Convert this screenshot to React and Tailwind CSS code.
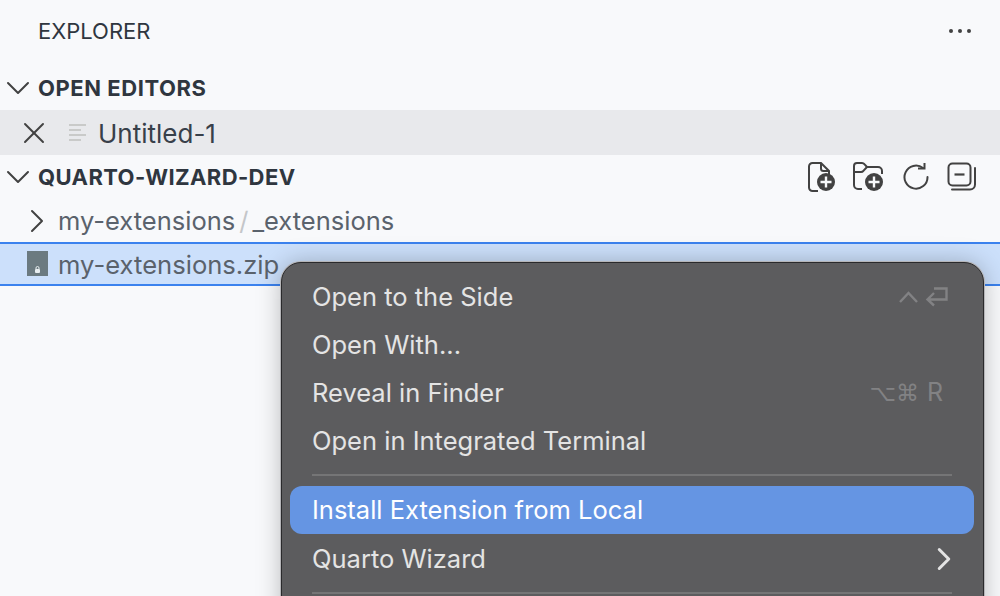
import React from 'react';
import { ChevronDown, ChevronRight, X } from 'lucide-react';

function NewFileIcon() {
    return (
        <svg width="28" height="30" viewBox="0 0 28 30" fill="none" stroke="#424242" strokeWidth="2" className="-mr-[1px]">
            <path d="M10 29H4.500A3.500 3.500 0 0 1 1 25.500V4.500A3.500 3.500 0 0 1 4.500 1H13l8 8v4" />
            <path d="M13 1v5.500A2.500 2.500 0 0 0 15.500 9H21" />
            <circle cx="18" cy="20" r="9" fill="#424242" stroke="none" />
            <path d="M18 14.500v11M12.500 20h11" stroke="#f8f9fb" strokeWidth="2.400" />
        </svg>
    );
}

function NewFolderIcon() {
    return (
        <svg width="32" height="30" viewBox="0 0 32 30" fill="none" stroke="#424242" strokeWidth="2">
            <path d="M9 27H5a4 4 0 0 1-4-4V4a3 3 0 0 1 3-3h5a3 3 0 0 1 2.400 1.200L14 5h11a4 4 0 0 1 4 4v3" />
            <path d="M1 10h7a3 3 0 0 0 2.400-1.200L14 5" />
            <circle cx="21" cy="20" r="9" fill="#424242" stroke="none" />
            <path d="M21 14.500v11M15.500 20h11" stroke="#f8f9fb" strokeWidth="2.400" />
        </svg>
    );
}

function RefreshIcon() {
    return (
        <svg width="26" height="28" viewBox="0 2 26 28" fill="none" stroke="#424242" strokeWidth="2">
            <path d="M20 7A11.500 11.500 0 1 0 24.500 16" strokeLinecap="round" />
            <path d="M21.500 1v6.500H15" />
        </svg>
    );
}

function CollapseIcon() {
    return (
        <svg width="30" height="30" viewBox="0 0 30 30" fill="none" stroke="#424242" strokeWidth="2">
            <rect x="1.500" y="1.500" width="22" height="22" rx="4" />
            <path d="M7.500 12.500h10" strokeWidth="2.200" />
            <path d="M5 27.500h18a5 5 0 0 0 5-5V6" strokeLinecap="round" />
        </svg>
    );
}

function Row({ children, className }) {
    return <div className={`flex items-center ${className}`}>{children}</div>;
}

function MenuItem({ label, shortcut, arrow, className = '' }) {
    return (
        <div className={`flex items-center justify-between h-12 pl-[30px] text-[#e4e4e4] ${className}`}>
            <span className="text-[25.5px]">{label}</span>
            {shortcut}
            {arrow && <ChevronRight size={38} strokeWidth={1.9} className="mr-[20px] text-[#e4e4e4]" />}
        </div>
    );
}

function Separator() {
    return <div className="h-[2px] ml-[30px] mr-[31px] bg-[#757576]" />;
}

export default function App() {
    return (
        <div className="relative w-[1000px] h-[596px] overflow-hidden bg-[#f8f9fb] font-['Inter',sans-serif] text-[#2f363f]">
            <div className="flex items-center justify-between h-[66px] pb-[4px] pl-[38px] pr-[29px]">
                <span className="text-[22px]">EXPLORER</span>
                <div className="flex gap-[5px]">
                    <span className="w-1 h-1 rounded-full bg-[#424242]" />
                    <span className="w-1 h-1 rounded-full bg-[#424242]" />
                    <span className="w-1 h-1 rounded-full bg-[#424242]" />
                </div>
            </div>

            <Row className="h-11">
                <ChevronDown size={40} strokeWidth={1.2} className="-ml-[2px] text-[#424242]" />
                <span className="text-[22px] font-bold tracking-[0.55px]">OPEN EDITORS</span>
            </Row>
            <Row className="h-[45px] bg-[#e8e9ec]">
                <X size={36} strokeWidth={1.3} className="ml-[16px] text-[#424242]" />
                <svg width="18" height="18" viewBox="0 0 18 18" className="ml-[17px]" fill="#c9cac9">
                    <rect x="0" y="0" width="17" height="2" />
                    <rect x="0" y="5" width="12" height="2" />
                    <rect x="0" y="10" width="17" height="2" />
                    <rect x="0" y="15" width="12" height="2" />
                </svg>
                <span className="ml-[11px] pt-[1px] text-[26px] text-[#38404a]">Untitled-1</span>
            </Row>

            <Row className="h-11 justify-between pr-[23px]">
                <div className="flex items-center">
                    <ChevronDown size={40} strokeWidth={1.2} className="-ml-[2px] text-[#424242]" />
                    <span className="text-[22px] font-bold tracking-[0.4px]">QUARTO-WIZARD-DEV</span>
                </div>
                <div className="flex items-center gap-[18px]">
                    <NewFileIcon />
                    <NewFolderIcon />
                    <RefreshIcon />
                    <CollapseIcon />
                </div>
            </Row>

            <Row className="h-[43px] text-[#5a626c]">
                <ChevronRight size={40} strokeWidth={1.2} className="ml-[17px] text-[#424242]" />
                <span className="ml-[1px] pt-[2px] text-[25.500px]">my-extensions</span>
                <span className="mx-[4px] pt-[2px] text-[25.500px] text-[#c4c6c9]">/</span>
                <span className="pt-[2px] text-[25.500px]">_extensions</span>
            </Row>
            <Row className="h-11 bg-[#cce0fb] border-y-2 border-[#3b82ee] text-[#5a626c]">
                <svg width="21" height="25" viewBox="0 0 21 25" className="ml-[27px] -mt-px">
                    <rect width="21" height="25" fill="#6b7a80" />
                    <rect x="8" y="18" width="5" height="4" rx="1" fill="#e8eef0" />
                    <path d="M9 18v-1a1.500 1.500 0 0 1 3 0v1" fill="none" stroke="#e8eef0" />
                </svg>
                <span className="ml-[10px] pt-[3px] text-[25.600px]">my-extensions.zip</span>
            </Row>

            {/* context menu sits over the tree */}
            <div className="absolute left-[281px] top-[262px] w-[703px] h-[400px] pt-[10px] rounded-[20px] bg-[#5c5c5e] border border-[#2a2a2c] shadow-[0_0_0_1px_#b5b5b8,0_0_24px_rgba(0,0,0,0.25)]">
                <MenuItem
                    label="Open to the Side"
                    className="pr-[35px]"
                    shortcut={
                        <span className="flex items-center gap-[7px] text-[#828284]">
                            <svg width="19" height="12" viewBox="0 0 19 12" fill="none" stroke="currentColor" strokeWidth="2.400"><path d="M1 11 9.500 2 18 11" /></svg>
                            <svg width="23" height="20" viewBox="0 0 23 20" fill="none" stroke="currentColor" strokeWidth="2.400"><path d="M9 1.500H21.500V12.500H3M9 6 2.500 12.500 9 18.500" /></svg>
                        </span>
                    }
                />
                <MenuItem label="Open With..." />
                <MenuItem
                    label="Reveal in Finder"
                    className="pr-[40px]"
                    shortcut={
                        <span className="flex items-center gap-[8px] text-[#828284]">
                            <span className="text-[23px] font-['DejaVu_Sans',sans-serif]">⌥⌘</span>
                            <span className="text-[25px]">R</span>
                        </span>
                    }
                />
                <MenuItem label="Open in Integrated Terminal" />
                <div className="pt-[9px] pb-[10px]"><Separator /></div>
                <div className="ml-2 mr-[9px] flex items-center h-12 pl-[22px] rounded-[12px] bg-[#6595e3] text-white text-[25.5px]">
                    Install Extension from Local
                </div>
                <MenuItem label="Quarto Wizard" arrow className="mt-px" />
                <div className="pt-[9px]"><Separator /></div>
            </div>
        </div>
    );
}
